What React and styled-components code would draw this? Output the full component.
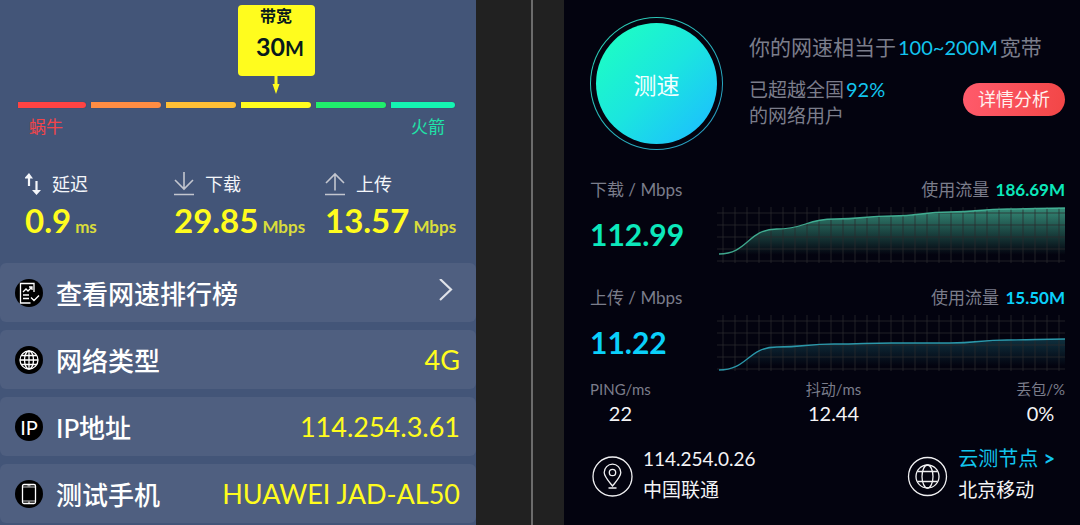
import React from 'react'
import styled, { createGlobalStyle } from 'styled-components'

const GlobalStyle = createGlobalStyle`
* {
    box-sizing: border-box;
    margin: 0;
    padding: 0;
}

body {
    background: #212121;
    font-family: Lato, "Noto Sans CJK SC", sans-serif;
}

button {
    border: none;
    font-family: inherit;
    cursor: pointer;
}

a {
    color: inherit;
    text-decoration: none;
}
`

const Page = styled.main`
display: grid;
grid-template-columns: 476fr 88px 516fr;
min-height: 100vh;
`

const Divider = styled.div`
background: #212121;
display: flex;
justify-content: center;
padding-left: 24px;

&::before {
    content: '';
    width: 2px;
    background: #6c6c6c;
}
`

/* ---------- left panel ---------- */

const BandwidthPanel = styled.section`
background: #435578;
padding-top: 5px;
overflow: hidden;
`

const Gauge = styled.div`
display: grid;
grid-template-columns: 68fr 70fr 70fr 70fr 70fr 64fr;
column-gap: 5px;
padding: 0 21px 0 18px;
`

const Marker = styled.div`
grid-column: 4;
justify-self: center;
display: flex;
flex-direction: column;
align-items: center;
margin: 0 -4px 8px;
`

const MarkerBox = styled.div`
width: 77px;
height: 71px;
border-radius: 4px;
background: #fffc1e;
color: #08191c;
text-align: center;
font-weight: 700;

h2 {
    font-size: 16px;
    line-height: 22px;
}

p {
    font-size: 25px;
    line-height: 38px;
    padding-left: 8px;
}

small {
    font-size: 20px;
}
`

const Segment = styled.div`
grid-row: 2;
height: 6px;
border-radius: 0 4px 4px 0;
background: ${props => props.$color};
box-shadow: 0 0 1px #2f3c52;
`

const ScaleLabels = styled.div`
display: flex;
justify-content: space-between;
padding: 6px 31px 0 29px;
font-size: 17px;
line-height: 26px;

span:first-child {
    color: #f34449;
}

span:last-child {
    color: #1fe3a8;
}
`

const Stats = styled.dl`
display: grid;
grid-template-columns: 149fr 151fr 151fr;
padding: 28px 0 16px 25px;
`

const StatName = styled.dt`
display: flex;
align-items: center;
gap: 9px;
font-size: 18px;
line-height: 32px;
color: #f4f6fa;
`

const StatValue = styled.dd`
font-size: 33px;
font-weight: 700;
line-height: 41px;
color: #fffc1e;
white-space: nowrap;

small {
    margin-left: 4px;
    font-size: 17px;
    color: #d9dc3c;
}
`

const InfoList = styled.ul`
display: grid;
gap: 8px;
list-style: none;
`

const InfoRow = styled.li`
display: flex;
align-items: center;
height: 59px;
padding: 0 16px 0 15px;
border-radius: 6px;
background: #4f5f80;
color: #fff;
font-size: 26px;

a {
    flex: 1;
    display: flex;
    align-items: center;
}
`

const InfoName = styled.span`
flex: 1;
margin-left: 13px;
font-weight: 500;
`

const InfoValue = styled.span`
color: #fffc1e;
font-size: 27px;
`

const IpBadge = styled.span`
width: 28px;
height: 28px;
border-radius: 50%;
background: #000;
font-size: 20px;
line-height: 28px;
text-align: center;
`

/* ---------- right panel ---------- */

const SpeedPanel = styled.section`
background: #03030f;
padding: 17px 15px 14px 26px;
color: #7b7d8b;
`

const Summary = styled.header`
display: flex;
gap: 26px;
`

const StartRing = styled.div`
flex: none;
width: 133px;
height: 133px;
padding: 1px;
border-radius: 50%;
background: linear-gradient(135deg, #2cd8b4, #2795c4);

div {
    height: 100%;
    padding: 5px;
    border-radius: 50%;
    background: #03030f;
}
`

const StartButton = styled.button`
width: 100%;
height: 100%;
border-radius: 50%;
background: linear-gradient(135deg, #1dfcc6 12%, #1be5df 50%, #1cc3fb 88%);
color: #f2ffff;
font-size: 23px;
`

const SummaryText = styled.div`
flex: 1;
padding-top: 15px;
white-space: nowrap;

em {
    font-style: normal;
    color: #12c5ee;
}
`

const Headline = styled.p`
font-size: 21px;
line-height: 30px;

em {
    margin: 0 2px;
    font-size: 20px;
}
`

const Ranking = styled.div`
display: flex;
justify-content: space-between;
align-items: center;
margin-top: 14px;
font-size: 19px;
line-height: 26px;

em {
    margin-left: 2px;
    font-size: 20px;
}
`

const DetailButton = styled.button`
height: 33px;
padding: 0 15px;
margin-bottom: 6px;
border-radius: 17px;
background: linear-gradient(100deg, #ff5b6c, #f24646);
color: #fff1ee;
font-size: 18px;
line-height: 33px;
`

const Traffic = styled.article`
display: grid;
grid-template-columns: 127px 1fr;
padding-top: ${props => props.$gap};
`

const TrafficHead = styled.div`
grid-column: 1 / -1;
display: flex;
justify-content: space-between;
font-size: 17px;
line-height: 28px;

strong {
    margin-left: 2px;
    color: ${props => props.$color};
}
`

const Rate = styled.p`
align-self: center;
font-size: 30px;
font-weight: 700;
line-height: 36px;
color: ${props => props.$color};
`

const ChartSvg = styled.svg`
display: block;
width: 100%;
height: 57px;
margin-top: 2px;
`

const Metrics = styled.dl`
display: flex;
justify-content: space-between;
padding-top: 6px;
text-align: center;

dt {
    font-size: 15px;
    line-height: 24px;
}

dd {
    font-size: 20px;
    line-height: 24px;
    color: #f4f4f6;
}
`

const Nodes = styled.footer`
display: flex;
justify-content: space-between;
padding: 18px 10px 0 2px;
`

const Node = styled.div`
display: flex;
align-items: center;
gap: 10px;
color: #f4f4f6;
font-size: 19px;
line-height: 31px;

svg {
    flex: none;
    margin-top: 4px;
}

a {
    color: #12c5ee;
    font-size: 20px;
}
`

/* ---------- icons ---------- */

const SwapIcon = () => (
    <svg width="18" height="24" viewBox="0 0 18 24" fill="none" stroke="#f4f6fa" strokeWidth="2.200">
        <path d="M4 14V4M11.500 9v11" />
        <path d="M-1 6.500l5-5.500 4 5.500zM7 18l4.500 5 4.500-5z" fill="#f4f6fa" stroke="none" />
    </svg>
)

const DownIcon = () => (
    <svg width="22" height="26" viewBox="0 0 22 26" fill="none" stroke="#c3c6cf" strokeWidth="1.600">
        <path d="M10 1v17M1 9l9 9 9-9M-1 23.500h21" />
    </svg>
)

const UpIcon = () => (
    <svg width="22" height="26" viewBox="0 0 22 26" fill="none" stroke="#c3c6cf" strokeWidth="1.600">
        <path d="M10 19.500V3M1 12l9-9 9 9M-1 23.500h21" />
    </svg>
)

const Badge = ({ children }) => (
    <svg width="28" height="28" viewBox="0 0 28 28" fill="none" stroke="#fff" strokeWidth="1.300">
        <circle cx="14" cy="14" r="14" fill="#000" stroke="none" />
        {children}
    </svg>
)

const ReportIcon = () => (
    <Badge>
        <path d="M19 13V4.500H5.500v19.500h10M8 13l3-3 2 2 4-4M14 8h3v3M8 16h6M8 19.500h6M16 18.500l3 3 5-5" />
    </Badge>
)

const NetworkIcon = () => (
    <Badge>
        <circle cx="14" cy="14" r="9" />
        <ellipse cx="14" cy="14" rx="4.500" ry="9" />
        <path d="M14 5v18M5 14h18M6.500 9.500h15M6.500 18.500h15" />
    </Badge>
)

const IpIcon = () => <IpBadge>IP</IpBadge>

const PhoneIcon = () => (
    <Badge>
        <rect x="7.500" y="4.500" width="13" height="19" rx="1.500" />
        <path d="M7.500 7h13M7.500 21h13M12.500 5.800h3M13 22.200h2" strokeWidth="0.800" />
    </Badge>
)

const ChevronIcon = () => (
    <svg width="21" height="28" viewBox="0 0 21 28" fill="none" stroke="#dfe2e8" strokeWidth="2.200">
        <path d="M1 0l11 10.500L1 21" />
    </svg>
)

const PinIcon = () => (
    <svg width="41" height="41" viewBox="0 0 41 41" fill="none" stroke="#f0f0f2" strokeWidth="1.300">
        <circle cx="20.500" cy="20.500" r="19.500" />
        <path d="M20.500 30c-4-5-8.300-9.500-8.300-13.500a8.300 8.300 0 0 1 16.600 0c0 4-4.300 8.500-8.300 13.500zM16.500 32h8" />
        <circle cx="20.500" cy="16.500" r="3.200" />
    </svg>
)

const GlobeIcon = () => (
    <svg width="41" height="41" viewBox="0 0 41 41" fill="none" stroke="#f0f0f2" strokeWidth="1.300">
        <circle cx="20.500" cy="20.500" r="19" />
        <circle cx="20.500" cy="20.500" r="11.500" />
        <ellipse cx="20.500" cy="20.500" rx="5.500" ry="11.500" />
        <path d="M10.500 15.500h20M10.500 25.500h20" />
    </svg>
)

// eases between the samples with level tangents
const toPath = (samples) => {
    const step = 346 / (samples.length - 1)
    return samples.reduce((path, y, i) => {
        const x = 2 + i * step
        if (i === 0) return `M${x} ${y}`
        const mid = x - step / 2
        return `${path}C${mid} ${samples[i - 1]} ${mid} ${y} ${x} ${y}`
    }, '')
}

const Chart = ({ id, samples, color, opacity }) => {
    const line = toPath(samples)
    return (
        <ChartSvg viewBox="0 0 348 57" preserveAspectRatio="none" fill="none">
            <defs>
                <linearGradient id={id} x1="0" y1="0" x2="0" y2="1">
                    <stop offset="0" stopColor={color} stopOpacity={opacity} />
                    <stop offset="0.85" stopColor={color} stopOpacity="0" />
                </linearGradient>
            </defs>
            <path d={`${line}V57H2Z`} fill={`url(#${id})`} />
            <g stroke="#2a2a2c" strokeOpacity="0.38" strokeWidth="2">
                {Array.from({ length: 29 }, (_, i) => <path key={i} d={`M${6 + i * 12} 1v56`} />)}
                {Array.from({ length: 5 }, (_, i) => <path key={i} d={`M0 ${7 + i * 12}h348`} />)}
            </g>
            <path d={line} stroke={color} strokeOpacity="0.9" strokeWidth="1.300" />
        </ChartSvg>
    )
}

const segments = ['#ff4343', '#ff8d43', '#ffbf35', '#fffc1e', '#20ee6c', '#14f5b2']

const stats = [
    { name: '延迟', value: '0.9', unit: 'ms', Icon: SwapIcon },
    { name: '下载', value: '29.85', unit: 'Mbps', Icon: DownIcon },
    { name: '上传', value: '13.57', unit: 'Mbps', Icon: UpIcon },
]

const infos = [
    { name: '网络类型', value: '4G', Icon: NetworkIcon },
    { name: 'IP地址', value: '114.254.3.61', Icon: IpIcon },
    { name: '测试手机', value: 'HUAWEI JAD-AL50', Icon: PhoneIcon },
]

const traffics = [
    { id: 'download', name: '下载', rate: '112.99', used: '186.69M', color: '#0ce8bb', line: '#45b89a', opacity: 0.75, gap: '26px', samples: [48, 23, 13, 10, 6, 3, 2] },
    { id: 'upload', name: '上传', rate: '11.22', used: '15.50M', color: '#0ad0fa', line: '#2fa5b8', opacity: 0.28, gap: '21px', samples: [56, 33, 30, 29, 29, 26, 25] },
]

const metrics = [
    { name: 'PING/ms', value: '22' },
    { name: '抖动/ms', value: '12.44' },
    { name: '丢包/%', value: '0%' },
]

const App = () => {
  return (
    <>
        <GlobalStyle/>
        <Page>
            <BandwidthPanel>
                <Gauge>
                    <Marker>
                        <MarkerBox>
                            <h2>带宽</h2>
                            <p>30<small>M</small></p>
                        </MarkerBox>
                        <svg width="8" height="18" viewBox="0 0 8 18" fill="#fffc1e">
                            <path d="M2.500 0h3v8h2L4 18 .5 8h2z" />
                        </svg>
                    </Marker>
                    {segments.map(color => <Segment key={color} $color={color}/>)}
                </Gauge>
                <ScaleLabels>
                    <span>蜗牛</span>
                    <span>火箭</span>
                </ScaleLabels>
                <Stats>
                    {stats.map(({ name, value, unit, Icon }) => (
                        <div key={name}>
                            <StatName><Icon/>{name}</StatName>
                            <StatValue>{value}<small>{unit}</small></StatValue>
                        </div>
                    ))}
                </Stats>
                <InfoList>
                    <InfoRow>
                        <a href="#ranking">
                            <ReportIcon/>
                            <InfoName>查看网速排行榜</InfoName>
                            <ChevronIcon/>
                        </a>
                    </InfoRow>
                    {infos.map(({ name, value, Icon }) => (
                        <InfoRow key={name}>
                            <Icon/>
                            <InfoName>{name}</InfoName>
                            <InfoValue>{value}</InfoValue>
                        </InfoRow>
                    ))}
                </InfoList>
            </BandwidthPanel>
            <Divider/>
            <SpeedPanel>
                <Summary>
                    <StartRing>
                        <div><StartButton type="button">测速</StartButton></div>
                    </StartRing>
                    <SummaryText>
                        <Headline>你的网速相当于<em>100~200M</em>宽带</Headline>
                        <Ranking>
                            <p>已超越全国<em>92%</em><br/>的网络用户</p>
                            <DetailButton type="button">详情分析</DetailButton>
                        </Ranking>
                    </SummaryText>
                </Summary>
                {traffics.map(item => (
                    <Traffic key={item.id} $gap={item.gap}>
                        <TrafficHead $color={item.color}>
                            <span>{item.name} / Mbps</span>
                            <span>使用流量 <strong>{item.used}</strong></span>
                        </TrafficHead>
                        <Rate $color={item.color}>{item.rate}</Rate>
                        <Chart id={item.id} samples={item.samples} color={item.line} opacity={item.opacity}/>
                    </Traffic>
                ))}
                <Metrics>
                    {metrics.map(({ name, value }) => (
                        <div key={name}>
                            <dt>{name}</dt>
                            <dd>{value}</dd>
                        </div>
                    ))}
                </Metrics>
                <Nodes>
                    <Node>
                        <PinIcon/>
                        <div>
                            <p>114.254.0.26</p>
                            <p>中国联通</p>
                        </div>
                    </Node>
                    <Node>
                        <GlobeIcon/>
                        <div>
                            <p><a href="#nodes">云测节点 <b>&gt;</b></a></p>
                            <p>北京移动</p>
                        </div>
                    </Node>
                </Nodes>
            </SpeedPanel>
        </Page>
    </>
  )
}

export default App
